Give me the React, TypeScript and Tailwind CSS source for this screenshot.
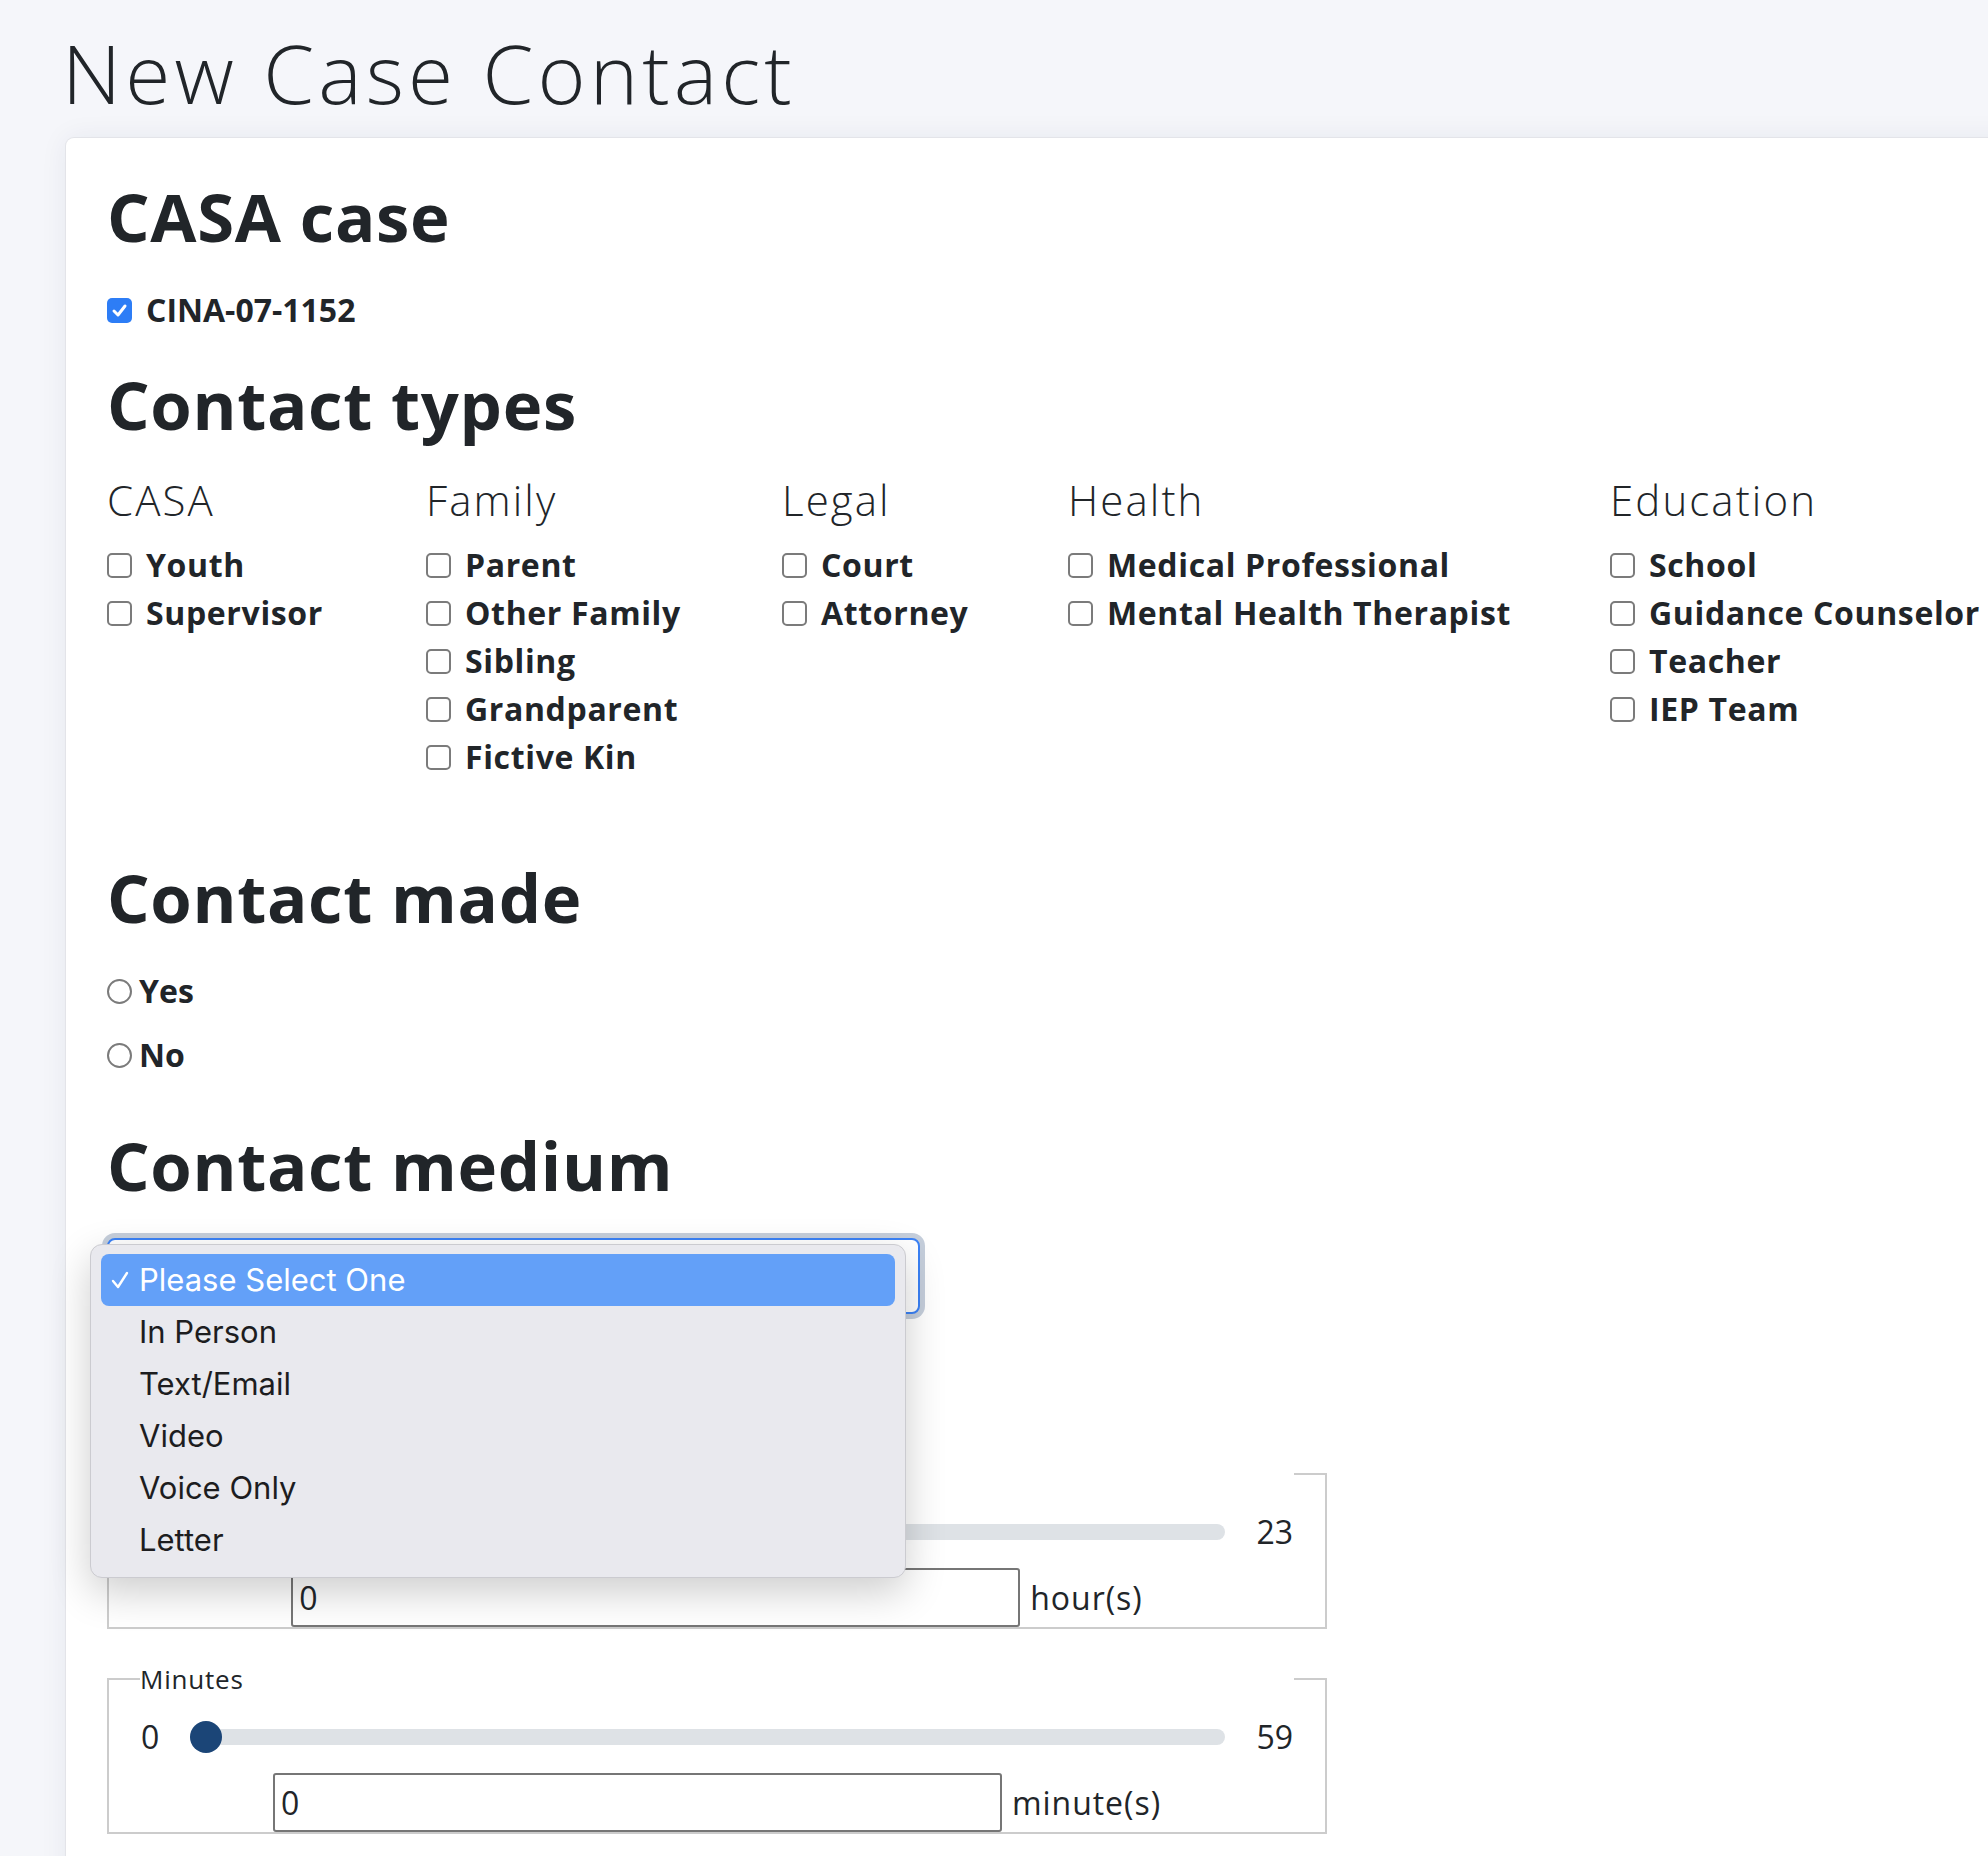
import React from "react";

type Col = { title: string; w: string; items: string[] };

const columns: Col[] = [
  { title: "CASA", w: "w-[319px]", items: ["Youth", "Supervisor"] },
  { title: "Family", w: "w-[356px]", items: ["Parent", "Other Family", "Sibling", "Grandparent", "Fictive Kin"] },
  { title: "Legal", w: "w-[286px]", items: ["Court", "Attorney"] },
  { title: "Health", w: "w-[542px]", items: ["Medical Professional", "Mental Health Therapist"] },
  { title: "Education", w: "w-[500px]", items: ["School", "Guidance Counselor", "Teacher", "IEP Team"] },
];

const mediums = ["Please Select One", "In Person", "Text/Email", "Video", "Voice Only", "Letter"];

function CheckBox({ checked = false }: { checked?: boolean }) {
  if (checked) {
    return (
      <span className="flex h-[25px] w-[25px] flex-none items-center justify-center rounded-[5px] bg-[#2d7df6]">
        <svg width="17" height="17" viewBox="0 0 17 17" fill="none">
          <path d="M3 9 L7 13 L14 4" stroke="white" strokeWidth="3" strokeLinecap="round" strokeLinejoin="round" />
        </svg>
      </span>
    );
  }
  return <span className="h-[25px] w-[25px] flex-none rounded-[5px] border-2 border-[#7b7b7b] bg-white" />;
}

function Radio() {
  return <span className="h-[25px] w-[25px] flex-none rounded-full border-2 border-[#7b7b7b] bg-white" />;
}

function Heading({ children, className = "" }: { children: React.ReactNode; className?: string }) {
  return <h2 className={"text-[67px] font-bold leading-[64px] tracking-[0.01em] " + className}>{children}</h2>;
}

function Duration({
  legend,
  max,
  unit,
  hidden = false,
  className = "",
}: {
  legend: string;
  max: number;
  unit: string;
  hidden?: boolean;
  className?: string;
}) {
  // hidden: the left part sits under the open dropdown
  return (
    <div className={"flex w-[1220px] flex-col border-x-2 border-b-2 border-[#cccccc] " + className}>
      <div className="-mx-[2px] -mt-[13px] flex h-[28px] items-center">
        <div className="h-[2px] w-[33px] bg-[#cccccc]" />
        <span className={"text-[26px] leading-none tracking-[0.03em] " + (hidden ? "invisible" : "")}>{legend}</span>
        <div className="flex-1" />
        <div className="h-[2px] w-[33px] bg-[#cccccc]" />
      </div>
      <div className="mt-[20px] flex h-[48px] items-center gap-[31px] px-[32px] text-[32px]">
        <span className={"leading-none " + (hidden ? "invisible" : "")}>0</span>
        <div className="relative h-[16px] flex-1 rounded-full bg-[#dee2e6]">
          <div className="absolute left-0 top-1/2 h-[32px] w-[32px] -translate-y-1/2 rounded-full bg-[#1b4577]" />
        </div>
        <span className="leading-none">{max}</span>
      </div>
      <div className="mt-[12px] flex items-center justify-center gap-[10px] text-[32px]">
        <div className="flex h-[59px] w-[729px] items-center rounded-[3px] border-2 border-[#767676] pl-[6px]">0</div>
        <span className="tracking-[0.03em]">{unit}</span>
      </div>
    </div>
  );
}

export default function App() {
  return (
    <div className="h-[1856px] w-full overflow-hidden bg-[#f5f6fa] font-['Open_Sans',sans-serif] text-[#212529]">
      <h1 className="pl-[62px] pt-[24px] text-[82px] font-light leading-[96px] tracking-[0.05em]">New Case Contact</h1>

      <div className="ml-[66px] mt-[18px] w-[1960px] rounded-[8px] bg-white pl-[41px] pt-[46px] shadow-[0_0_28px_rgba(30,40,80,0.07)] ring-1 ring-[#e3e4e9]">
        <Heading>CASA case</Heading>
        <label className="mt-[38px] flex h-[48px] items-center gap-[14px] text-[32px] font-bold">
          <CheckBox checked />
          CINA-07-1152
        </label>

        <Heading className="mt-[38px]">Contact types</Heading>
        <div className="mt-[40px] flex">
          {columns.map((col) => (
            <div key={col.title} className={col.w + " flex-none"}>
              <h5 className="mb-[17px] text-[42px] font-light leading-[48px] tracking-[0.05em]">{col.title}</h5>
              {col.items.map((item) => (
                <label key={item} className="flex h-[48px] items-center gap-[14px] whitespace-nowrap text-[32px] font-bold tracking-[0.02em]">
                  <CheckBox />
                  {item}
                </label>
              ))}
            </div>
          ))}
        </div>

        <Heading className="mt-[84px]">Contact made</Heading>
        <label className="mt-[38px] flex h-[48px] items-center gap-[7px] text-[32px] font-bold">
          <Radio />
          Yes
        </label>
        <label className="mt-[16px] flex h-[48px] items-center gap-[7px] text-[32px] font-bold">
          <Radio />
          No
        </label>

        <Heading className="mt-[54px]">Contact medium</Heading>
        <div className="relative mt-[41px] w-[813px]">
          <div className="h-[76px] rounded-[8px] border-2 border-[#3b82f6] bg-white ring-[5px] ring-[#c5cedb]" />
          {/* open native-style dropdown */}
          <div className="absolute -left-[17px] top-[6px] z-10 flex w-[816px] flex-col rounded-[12px] border border-[#cbcbd0] bg-[#e9e9ee] px-[10px] pb-[11px] pt-[9px] font-['Inter',sans-serif] text-[31px] text-[#1d1d1f] shadow-[0_14px_40px_rgba(0,0,0,0.2)]">
            {mediums.map((m, i) => (
              <div
                key={m}
                className={
                  i === 0
                    ? "flex h-[52px] items-center rounded-[8px] bg-[#63a0f8] pl-[9px] text-white"
                    : "flex h-[52px] items-center pl-[9px]"
                }
              >
                <span className="w-[29px] flex-none">
                  {i === 0 && (
                    <svg width="20" height="20" viewBox="0 0 20 20" fill="none">
                      <path d="M3 11 L8 17 L17 3" stroke="white" strokeWidth="2.4" strokeLinecap="round" strokeLinejoin="round" />
                    </svg>
                  )}
                </span>
                {m}
              </div>
            ))}
          </div>
        </div>

        <Duration legend="Hours" max={23} unit="hour(s)" hidden className="mt-[159px]" />
        <Duration legend="Minutes" max={59} unit="minute(s)" className="mt-[49px]" />
        <div className="h-[60px]" />
      </div>
    </div>
  );
}
